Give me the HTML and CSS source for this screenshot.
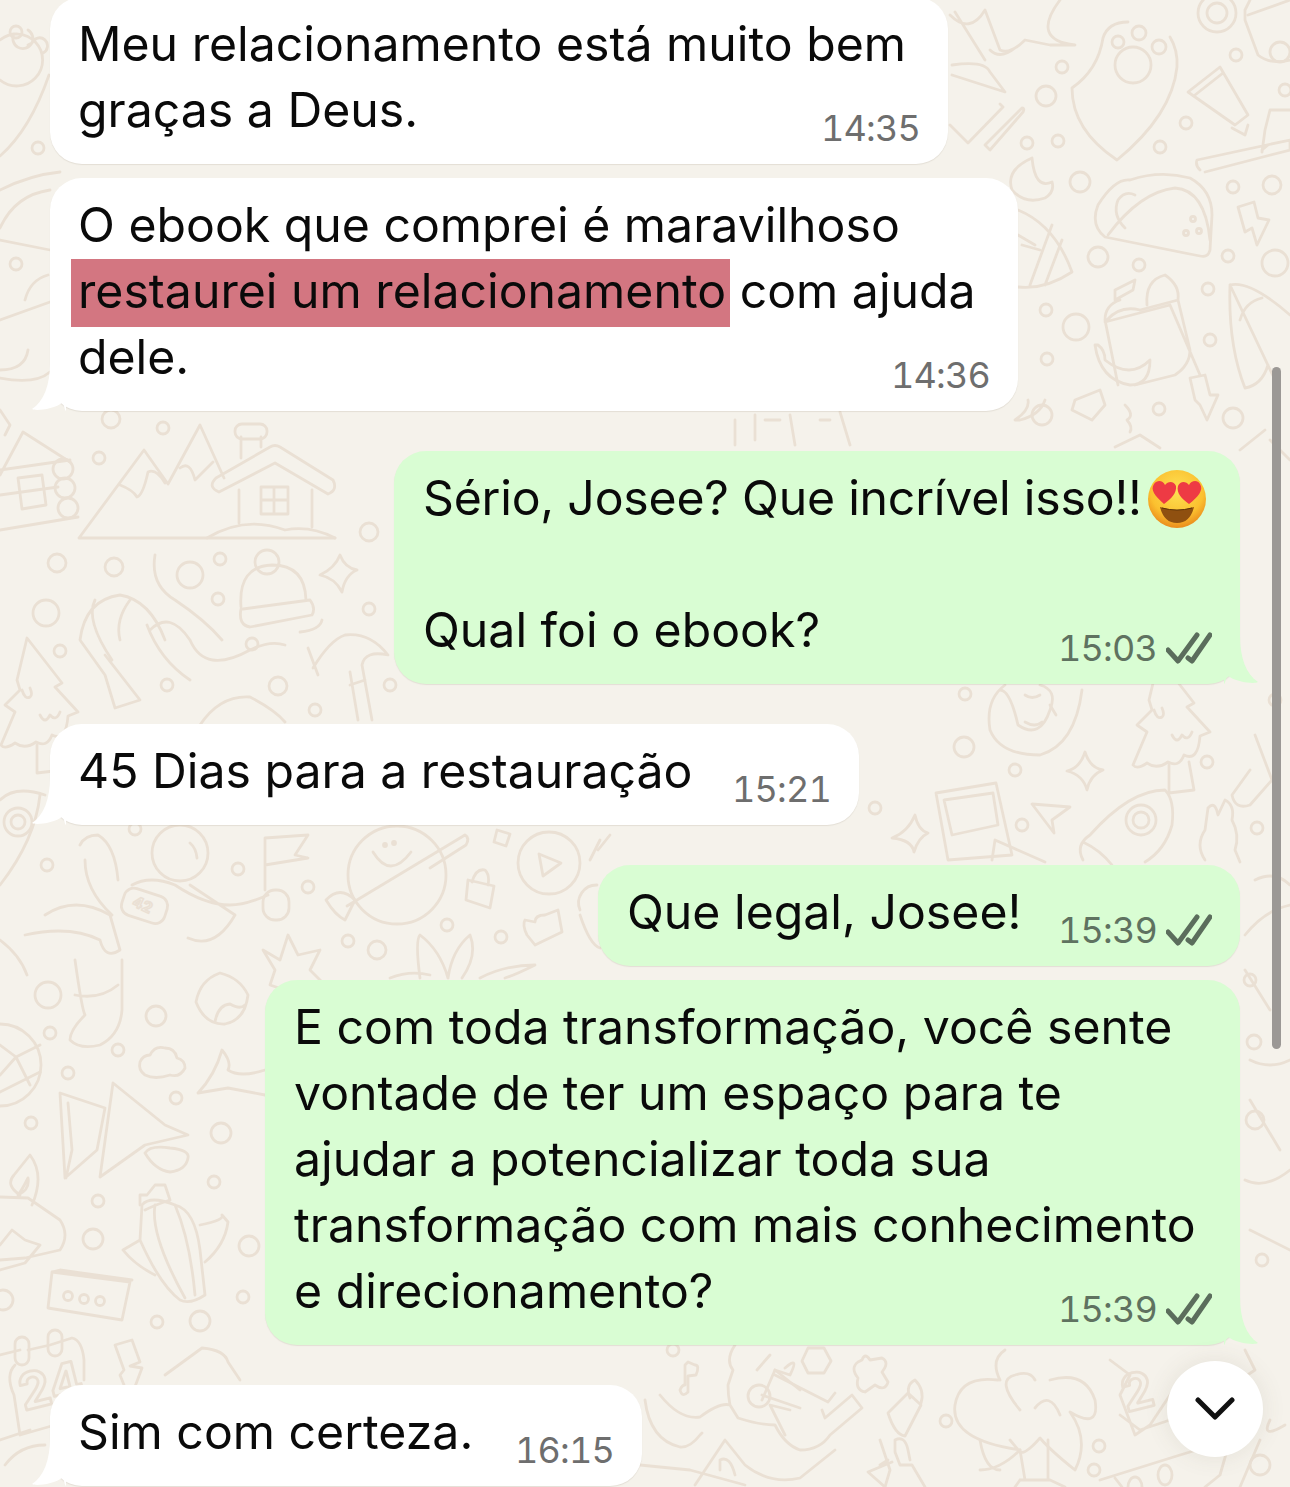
FILE: index.html
```html
<!DOCTYPE html>
<html lang="pt-BR">
  <head>
    <title>Conversa</title>
    <meta http-equiv="Content-Type" content="text/html; charset=UTF-8"/>
    <link rel="stylesheet" href="styles.css">
  </head>
  <body>
    <div class="chat">
      <!-- wallpaper doodles -->
      <svg class="wallpaper" width="1290" height="1487" viewBox="0 0 1290 1487" fill="none" aria-hidden="true">
        <defs>
          <g id="tree">
            <path d="M27 638L62 683L55 687L78 712L68 716Q66 742 52 735Q47 748 36 742Q25 750 15 743Q5 750 1 745L15 712L5 705L20 690L17 680Z"/>
            <path d="M37 745V773L62 770L57 742M22 690Q25 700 30 697Q33 695 30 688M40 715Q45 725 50 715Q56 722 60 712"/>
          </g>
        </defs>
        <g class="dots">
          <circle cx="16" cy="32" r="6"/><circle cx="38" cy="148" r="6"/><circle cx="16" cy="264" r="6"/>
          <circle cx="111" cy="419" r="9"/><circle cx="163" cy="428" r="6"/><circle cx="99" cy="458" r="6"/><circle cx="369" cy="532" r="9"/><circle cx="57" cy="563" r="9"/><circle cx="114" cy="567" r="9"/><circle cx="190" cy="575" r="13"/><circle cx="220" cy="559" r="6"/><circle cx="218" cy="599" r="6"/><circle cx="369" cy="609" r="6"/><circle cx="46" cy="613" r="13"/>
          <circle cx="1062" cy="67" r="6"/><circle cx="1046" cy="96" r="10"/><circle cx="1027" cy="143" r="6"/><circle cx="1058" cy="141" r="6"/><circle cx="1080" cy="182" r="10"/><circle cx="1186" cy="123" r="6"/><circle cx="1160" cy="147" r="6"/><circle cx="1236" cy="55" r="6"/><circle cx="1285" cy="90" r="6"/><circle cx="1233" cy="187" r="6"/><circle cx="1272" cy="185" r="9"/><circle cx="1098" cy="257" r="10"/><circle cx="1139" cy="265" r="6"/><circle cx="1228" cy="256" r="6"/><circle cx="1275" cy="263" r="13"/><circle cx="1046" cy="310" r="6"/><circle cx="1076" cy="327" r="13"/><circle cx="1208" cy="289" r="6"/><circle cx="1210" cy="340" r="6"/><circle cx="1047" cy="359" r="6"/><circle cx="1159" cy="409" r="6"/><circle cx="1042" cy="415" r="10"/><circle cx="1233" cy="418" r="10"/>
          <circle cx="60" cy="651" r="6"/><circle cx="167" cy="685" r="6"/><circle cx="252" cy="644" r="6"/><circle cx="278" cy="686" r="9"/><circle cx="315" cy="710" r="6"/><circle cx="390" cy="685" r="6"/><circle cx="47" cy="865" r="6"/><circle cx="238" cy="869" r="6"/><circle cx="308" cy="887" r="6"/><circle cx="348" cy="941" r="6"/><circle cx="377" cy="950" r="9"/><circle cx="135" cy="829" r="6"/>
          <circle cx="447" cy="925" r="6"/><circle cx="501" cy="937" r="6"/>
          <circle cx="965" cy="694" r="6"/><circle cx="964" cy="747" r="10"/><circle cx="875" cy="808" r="6"/><circle cx="1015" cy="770" r="6"/><circle cx="1022" cy="825" r="6"/><circle cx="1207" cy="762" r="6"/><circle cx="1257" cy="828" r="6"/>
          <circle cx="48" cy="995" r="13"/><circle cx="156" cy="1016" r="10"/><circle cx="50" cy="1033" r="6"/><circle cx="118" cy="1050" r="6"/><circle cx="68" cy="1073" r="6"/><circle cx="176" cy="1098" r="6"/><circle cx="31" cy="1123" r="6"/><circle cx="221" cy="1133" r="10"/><circle cx="214" cy="1182" r="6"/><circle cx="98" cy="1201" r="6"/><circle cx="93" cy="1239" r="10"/><circle cx="249" cy="1246" r="10"/><circle cx="243" cy="1297" r="6"/><circle cx="157" cy="1322" r="6"/><circle cx="200" cy="1321" r="10"/><circle cx="3" cy="1300" r="10"/>
          <circle cx="673" cy="1350" r="6"/><circle cx="946" cy="1421" r="6"/><circle cx="1099" cy="1446" r="6"/><circle cx="1094" cy="1470" r="6"/><circle cx="1254" cy="1042" r="7"/><circle cx="1262" cy="1260" r="6"/><circle cx="1255" cy="1120" r="9"/><circle cx="1260" cy="1465" r="10"/>
          <circle cx="1250" cy="980" r="6"/><circle cx="1275" cy="700" r="6"/>
        </g>
        <g class="doodles">
          <!-- top left paw, wraps from the right -->
          <path d="M0 80A26 26 0 1 0 0 40M14 34a10 10 0 1 0 14 -4M28 45l4 -2a8 8 0 1 1 11 10M49 75Q30 130 0 156"/>
          <path d="M0 190Q30 175 60 172M0 240L50 250M0 228Q15 195 50 190M0 320L50 302M25 300Q30 280 48 275M0 370Q25 370 28 350M0 378Q35 385 50 372M0 410L10 425L5 435"/>
          <!-- cabin -->
          <path d="M0 475L23 432L70 462M0 470L70 460M0 495L58 487M0 530L78 517"/>
          <path d="M18 478L42 475L46 505L22 509Z"/>
          <circle cx="63" cy="469" r="10"/><circle cx="65" cy="488" r="10"/><circle cx="68" cy="508" r="10"/>
          <!-- mountains and house -->
          <path d="M79 538L144 450L168 484L200 425L224 478M79 538H335M120 485Q133 490 137 497Q143 495 148 472Q156 468 165 483M180 468Q190 460 195 480Q205 470 213 462"/>
          <path d="M216 478Q207 487 219 492L275 463L328 494Q338 490 333 480L280 447Q275 444 270 447ZM239 490V523M312 490V527M241 458V437M261 447V437M207 538Q245 515 285 530Q310 525 335 538"/>
          <rect x="235" y="424" width="32" height="15" rx="7"/>
          <path d="M261 487H288V514H261ZM274 487V514M261 500H288"/>
          <!-- beanie -->
          <path d="M241 607Q238 566 272 565Q305 565 306 600M243 609L310 600Q316 608 312 615L250 627Q238 625 241 609"/>
          <circle cx="267" cy="562" r="12"/>
          <path d="M320 575Q335 568 340 555Q345 568 357 570Q345 575 342 592Q335 578 320 575ZM322 620Q320 630 300 632M155 555Q150 585 175 600Q205 620 222 640"/>
          <!-- shrimp, hammer -->
          <path d="M80 640Q85 600 120 595Q150 600 165 640M95 600Q85 620 112 660M130 600Q115 620 120 640M80 640L105 675L115 708L140 700L105 655"/>
          <path d="M150 630Q170 610 190 640Q205 675 250 650Q270 640 285 645M147 625Q160 660 190 680"/>
          <path d="M308 648L318 675M313 668Q330 640 345 635Q370 632 388 655Q365 650 362 665L372 720M350 672L358 720M350 685L365 680"/>
          <path d="M200 725Q220 695 250 697Q275 710 285 722"/>
          <use href="#tree"/>
          <use href="#tree" x="1132" y="20"/>
          <path d="M0 800Q15 785 45 795M40 795Q35 840 0 885"/>
          <circle cx="18" cy="822" r="14"/><circle cx="18" cy="822" r="7"/>
          <!-- astronaut -->
          <circle cx="180" cy="853" r="28"/>
          <path d="M190 843Q196 848 197 858M80 845Q85 835 98 835Q115 845 118 880M85 860Q85 890 112 915M132 885Q150 875 175 885Q205 905 230 905Q245 905 268 895M190 885L235 915Q215 950 188 938"/>
          <rect x="122" y="892" width="45" height="28" rx="10" transform="rotate(18 145 906)"/>
          <text class="num small" x="133" y="911" transform="rotate(25 145 905)">42</text>
          <path d="M45 915Q75 895 110 915L120 950Q105 960 100 940Q70 925 25 935M0 940Q20 955 27 975M75 960Q82 1010 85 1015Q70 1030 70 1040Q80 1050 100 1045Q120 1035 122 1010V960M75 995Q100 1000 118 985"/>
          <path d="M265 838L308 835L295 855L308 858L265 865M265 838V890"/>
          <rect x="263" y="890" width="26" height="30" rx="12"/>
          <!-- burst -->
          <path d="M263 950L280 960L288 935L298 955L320 950L310 970L322 982L300 985L285 990L270 985L275 970Z"/>
          <!-- planet -->
          <circle cx="397" cy="875" r="49"/>
          <path d="M373 852Q390 880 411 852M347 906L465 835Q470 838 466 845L430 868M326 900Q340 885 355 900Q350 910 345 920Q335 915 326 900Z"/>
          <circle cx="385" cy="845" r="1.5"/><circle cx="394" cy="843" r="1.5"/>
          <circle cx="549" cy="863" r="31"/>
          <path d="M539 854L561 863L543 876Z"/>
          <path d="M497 830L510 834L506 846L494 842ZM468 880L494 886L490 908L466 900ZM472 882Q476 868 485 870Q490 875 488 885"/>
          <path d="M525 920L535 922Q535 915 545 915L558 910L562 932L535 945L527 935Q522 925 525 920ZM600 840L590 860M598 850L610 835M580 910A18 18 0 0 1 597 885M580 915Q590 945 600 948"/>
          <path d="M420 978Q415 940 420 935Q440 950 448 978M448 978Q452 950 470 935Q478 955 462 978M480 978Q505 965 535 965Q515 975 505 978M390 978Q410 970 430 975"/>
          <!-- tent and bowl -->
          <path d="M60 1093L105 1108L97 1150L65 1178L60 1093ZM113 1083L165 1125L188 1135L145 1145L100 1177L113 1083ZM68 1103L72 1150L66 1178"/>
          <path d="M145 1153Q150 1145 170 1148Q190 1150 188 1158Q186 1170 170 1172Q155 1170 145 1153"/>
          <!-- cloud, rock, fin -->
          <path d="M145 1075Q138 1070 140 1062Q143 1055 150 1055Q155 1045 165 1048Q175 1048 177 1058Q185 1060 185 1068Q180 1078 170 1075Q155 1080 145 1075Z"/>
          <path d="M196 1002Q200 980 220 973Q240 978 248 995Q245 1020 225 1024Q205 1025 196 1002ZM215 1022Q218 1005 230 1004Q240 1010 245 1005"/>
          <path d="M198 1093Q215 1075 222 1050Q232 1062 228 1070Q240 1078 265 1070M198 1093L228 1088L265 1095"/>
          <!-- cactus -->
          <path d="M142 1205Q150 1195 175 1205Q195 1210 200 1250L205 1295Q190 1305 180 1300Q160 1285 140 1240ZM155 1205Q150 1235 185 1298M175 1205Q190 1240 195 1295M200 1225Q225 1220 222 1215L228 1222Q225 1245 205 1262M140 1240L123 1250Q135 1265 155 1275M140 1205L140 1195L147 1195L155 1185L165 1185L170 1200Q155 1205 145 1210"/>
          <!-- candle -->
          <path d="M20 1195Q5 1185 14 1175L30 1155Q45 1175 32 1205M18 1195Q30 1190 28 1178Q22 1190 18 1195M0 1197L28 1198L60 1220Q70 1235 60 1250L25 1258L0 1260M0 1270L25 1263L40 1245L25 1240L12 1230L0 1245"/>
          <!-- box -->
          <path d="M52 1272L130 1282L122 1320L48 1308ZM52 1272L60 1270L132 1280"/>
          <circle cx="68" cy="1296" r="4.5"/><circle cx="84" cy="1299" r="4.5"/><circle cx="100" cy="1301" r="4.5"/>
          <!-- globe -->
          <circle cx="0" cy="1065" r="41"/>
          <path d="M0 1045L16 1057L40 1045M16 1057L0 1075M16 1057L30 1085M0 1092L40 1072"/>
          <!-- dumbbell, lightning, calendar -->
          <path d="M0 1355L20 1350M28 1350L50 1345L72 1338Q82 1340 84 1360V1380"/>
          <rect x="15" y="1337" width="14" height="28" rx="7"/><rect x="48" y="1330" width="14" height="26" rx="7"/>
          <path d="M115 1345L132 1340L140 1362L130 1366L142 1368L130 1400L120 1375L124 1370Z"/>
          <path d="M165 1375L202 1348Q225 1350 228 1362L240 1380M14 1395L20 1435L90 1415L86 1395M14 1395Q5 1375 15 1365"/>
          <text class="num" x="18" y="1406" transform="rotate(-14 40 1385)">24</text>
          <path d="M0 1440L30 1430M5 1465Q20 1445 45 1445"/>
          <!-- upper right group -->
          <path d="M950 15Q970 35 985 10L1000 50Q1010 55 1025 40L1050 45L1075 45Q1030 40 1060 0M952 65Q985 60 990 72L1005 92L952 75M955 12L985 60M990 50Q1000 60 1015 48"/>
          <path d="M1072 88Q1098 70 1103 38Q1108 22 1128 22M1170 37Q1178 50 1177 67Q1172 115 1117 160Q1072 130 1072 88"/>
          <circle cx="1133" cy="65" r="18"/><circle cx="1118" cy="42" r="6"/><circle cx="1139" cy="33" r="7"/><circle cx="1159" cy="47" r="7"/>
          <path d="M950 125L968 143L1003 107L1000 104M985 145L1022 108Q1025 108 1023 112L990 150Z"/>
          <circle cx="1217" cy="13" r="19"/><circle cx="1217" cy="13" r="10"/>
          <path d="M1250 0L1245 10L1245 20L1258 55Q1270 65 1290 60M1248 15L1290 0"/>
          <circle cx="1280" cy="52" r="10"/>
          <path d="M1188 92L1220 67L1248 115L1235 125ZM1195 95L1223 73M1232 128L1245 135L1248 125"/>
          <path d="M1200 170Q1195 165 1197 160L1290 140V150L1205 172M1262 152L1265 130L1270 110L1290 110M1262 150L1268 145"/>
          <path d="M1032 158Q1005 170 1012 190Q1025 205 1045 198Q1055 192 1052 182Q1035 190 1032 158Z"/>
          <!-- taco -->
          <path d="M1105 237Q1090 225 1098 205Q1115 178 1130 180Q1160 170 1190 178Q1212 190 1212 215L1210 250Q1208 258 1200 256Z"/>
          <path d="M1108 235Q1140 192 1175 188Q1205 190 1210 240M1125 228Q1112 215 1118 200Q1125 190 1135 195"/>
          <circle cx="1193" cy="219" r="2.5"/><circle cx="1199" cy="231" r="2.5"/><circle cx="1186" cy="233" r="2.5"/>
          <path d="M1238 207L1254 202L1258 218L1269 220L1257 245L1252 228L1245 232Z"/>
          <!-- football -->
          <path d="M1018 210Q1055 225 1072 272Q1045 290 1018 287M1052 225L1030 285M1062 240L1045 285M1022 245L1040 250M1018 235L1035 245"/>
          <!-- shopping bag -->
          <path d="M1105 320L1118 385M1107 320Q1120 305 1140 310L1178 300L1190 350Q1190 365 1175 375L1135 385M1105 322L1170 305L1200 375M1115 290L1135 280L1133 290L1115 300ZM1120 300Q1105 305 1105 320M1147 305Q1145 280 1165 275Q1180 285 1178 300"/>
          <path d="M1095 345Q1100 380 1130 385Q1150 385 1150 360Q1130 380 1105 360Q1105 350 1098 345Z"/>
          <!-- surfboard -->
          <path d="M1230 285Q1228 345 1245 388Q1262 385 1268 365M1230 285Q1250 280 1290 315M1240 320Q1245 302 1262 298M1230 285L1275 380"/>
          <path d="M1045 400Q1040 415 1020 420L1015 420Q1030 410 1028 400M1075 400L1100 390L1105 405L1092 420L1072 410Z"/>
          <path d="M1125 405Q1135 415 1127 420Q1133 427 1130 432M1115 447L1140 435L1160 448M1190 378L1205 375L1210 395L1218 395L1207 420L1200 405L1195 400Z"/>
          <!-- area below grey check -->
          <path d="M1240 450L1265 430M1270 440L1290 460"/>
          <path d="M735 420V445M755 415V440M790 415L795 445M840 412L850 445M780 420H765M820 420H830"/>
          <path d="M1005 685Q985 700 990 730Q1000 755 1040 755Q1075 745 1082 690M1000 690Q1010 690 1018 725Q1040 740 1050 710Q1058 690 1040 685"/>
          <path d="M1025 722Q1035 728 1042 722M1025 695Q1032 700 1040 695M1050 705L1056 715"/>
          <path d="M1255 735L1272 780L1250 805Q1235 810 1232 795L1250 770"/>
          <!-- frames -->
          <path d="M936 793L996 783L1012 855L948 860ZM944 800L993 793L998 825L952 835Z"/>
          <path d="M992 860L995 840L1045 862"/>
          <path d="M915 815Q918 830 928 833Q918 838 914 852Q912 840 892 838Q908 832 915 815ZM1085 752Q1090 768 1103 770Q1090 775 1087 790Q1083 775 1067 771Q1080 768 1085 752ZM1032 804L1070 807L1052 820L1054 833Z"/>
          <path d="M1083 860Q1075 845 1090 835Q1130 790 1165 790Q1175 800 1172 825Q1165 850 1145 862M1083 842Q1100 850 1112 865"/>
          <circle cx="1141" cy="820" r="15"/><circle cx="1141" cy="820" r="8"/>
          <path d="M1205 860Q1195 845 1205 830L1208 808Q1215 800 1218 815L1225 800Q1235 805 1232 820Q1240 835 1235 850L1240 862"/>
          <!-- right rail -->
          <path d="M1255 880Q1275 870 1290 885M1245 935Q1265 910 1290 905M1245 970L1270 1010M1250 1060Q1270 1070 1290 1060M1250 1100L1280 1150M1245 1180Q1265 1190 1290 1170M1250 1230L1290 1250M1245 1350L1255 1370L1240 1380"/>
          <!-- lower centre figure -->
          <path d="M645 1400Q650 1440 680 1447Q690 1448 700 1435L702 1433M660 1395Q680 1420 700 1417Q720 1402 730 1405L738 1418Q760 1425 775 1425Q785 1445 800 1450Q820 1450 830 1435L862 1408L852 1395L825 1418L822 1410M730 1405Q728 1395 728 1385L733 1370Q725 1360 735 1345M785 1435L770 1405L790 1410M762 1400L775 1370L800 1390"/>
          <path d="M762 1395L800 1408M775 1375L828 1402L835 1393"/>
          <circle cx="759" cy="1396" r="11"/>
          <path d="M757 1370L770 1355M775 1370L790 1375Q800 1355 785 1368"/>
          <path d="M695 1485L725 1440L745 1465Q770 1485 800 1478L835 1450M640 1465L690 1470L745 1485M720 1470V1460Q730 1455 735 1475"/>
          <path d="M688 1362L695 1365Q700 1365 696 1375L688 1376V1392Q682 1398 680 1390Q682 1385 685 1385V1365Z"/>
          <path d="M808 1348H824L831 1361L824 1373H808L802 1361Z"/>
          <path d="M862 1360Q865 1352 870 1360L882 1358Q890 1362 882 1372L888 1382Q885 1392 875 1385L865 1392Q855 1390 858 1378Q850 1368 858 1362Z"/>
          <path d="M888 1413L908 1393L921 1405L905 1436Q895 1435 888 1413ZM910 1398Q905 1385 915 1380Q925 1390 921 1403"/>
          <path d="M880 1440L890 1470L885 1487M925 1487L912 1465L900 1465L895 1452V1440Q905 1435 908 1450L910 1460"/>
          <path d="M892 1462L868 1472L885 1487M880 1465L888 1460"/>
          <!-- big tree -->
          <path d="M998 1380Q960 1375 955 1405Q950 1440 1020 1450Q1000 1470 980 1470M1000 1380Q990 1360 1005 1350M1000 1470Q985 1470 980 1440M1050 1380Q1085 1370 1095 1400Q1100 1430 1070 1412Q1090 1440 1075 1470Q1050 1450 1040 1438Q1025 1455 1020 1452L1010 1440"/>
          <path d="M1020 1410Q995 1380 1015 1375Q1030 1370 1035 1380M1035 1408Q1050 1390 1060 1415M1020 1450L1025 1480M1048 1440V1480M1020 1480Q1035 1480 1050 1480L1065 1487M1015 1487L1020 1480"/>
          <!-- calendar and melon -->
          <path d="M1110 1360L1130 1375L1120 1395L1135 1435L1150 1425L1180 1380M1120 1415L1140 1430L1170 1420"/>
          <text class="num" x="1120" y="1408" transform="rotate(-14 1140 1385)">2</text>
          <path d="M1100 1480L1180 1455L1230 1440L1220 1475L1205 1487M1115 1478L1122 1487"/>
          <ellipse cx="1165" cy="1475" rx="7" ry="10"/><ellipse cx="1135" cy="1487" rx="7" ry="10"/>
          <path d="M1270 1420Q1260 1440 1285 1425M1240 1487L1260 1440"/>
        </g>
      </svg>

      <div class="messages">
        <div class="bubble in w-898">
          <p class="text">Meu relacionamento está muito bem<br>graças a Deus.</p>
          <div class="meta"><span class="time">14:35</span></div>
        </div>
        <div class="bubble in w-968 has-tail">
          <p class="text">O ebook que comprei é maravilhoso<br><span class="mark">restaurei um relacionamento</span> com ajuda<br>dele.</p>
          <div class="meta"><span class="time">14:36</span></div>
          <svg class="tail" width="34" height="48" viewBox="0 0 34 48"><path d="M18 0C18 22 12 38 0 46C2 48 22 47 31 39Q33 48 34 48V0Z"/></svg>
        </div>

        <div class="bubble out w-846 next-group has-tail">
          <p class="text"><span class="tight">Sério, Josee? Que incrível isso!!</span><svg class="emoji" width="60" height="60" viewBox="0 0 60 60"><defs><radialGradient id="face" cx="50%" cy="35%" r="65%"><stop offset="0" stop-color="#fde154"/><stop offset=".7" stop-color="#fbc02f"/><stop offset="1" stop-color="#ea8b1c"/></radialGradient></defs><circle cx="30" cy="30" r="29" fill="url(#face)"/><path d="M13 38Q30 44 47 38Q43 54 30 54Q17 54 13 38Z" fill="#8f5010"/><path d="M15 39Q30 43 45 39" stroke="#5b3208" stroke-width="1" fill="none"/><path d="M17 35C8 27 3 21 7 15C11 10 16 12 18 16C21 12 27 12 29 17C30 24 24 30 17 35Z" fill="#ee3a44"/><path d="M42 35C35 30 29 24 31 17C33 12 39 12 42 16C44 12 50 10 53 15C57 21 51 28 42 35Z" fill="#ee3a44"/></svg><br>&nbsp;<br>Qual foi o ebook?</p>
          <div class="meta">
            <span class="time">15:03</span>
            <svg class="checks" width="46" height="32" viewBox="0 0 46 32"><path d="M2 18L12 29L31 3M22 26L26 29L44 3"/></svg>
          </div>
          <svg class="tail" width="34" height="48" viewBox="0 0 34 48"><path d="M16 0C16 22 22 38 34 46C32 48 12 47 3 39Q1 48 0 48V0Z"/></svg>
        </div>

        <div class="bubble in w-809 next-group has-tail">
          <p class="text">45 Dias para a restauração</p>
          <div class="meta"><span class="time">15:21</span></div>
          <svg class="tail" width="34" height="48" viewBox="0 0 34 48"><path d="M18 0C18 22 12 38 0 46C2 48 22 47 31 39Q33 48 34 48V0Z"/></svg>
        </div>

        <div class="bubble out w-642 next-group">
          <p class="text">Que legal, Josee!</p>
          <div class="meta">
            <span class="time">15:39</span>
            <svg class="checks" width="46" height="32" viewBox="0 0 46 32"><path d="M2 18L12 29L31 3M22 26L26 29L44 3"/></svg>
          </div>
        </div>
        <div class="bubble out w-975 has-tail">
          <p class="text">E com toda transformação, você sente<br>vontade de ter um espaço para te<br>ajudar a potencializar toda sua<br>transformação com mais conhecimento<br>e direcionamento?</p>
          <div class="meta">
            <span class="time">15:39</span>
            <svg class="checks" width="46" height="32" viewBox="0 0 46 32"><path d="M2 18L12 29L31 3M22 26L26 29L44 3"/></svg>
          </div>
          <svg class="tail" width="34" height="48" viewBox="0 0 34 48"><path d="M16 0C16 22 22 38 34 46C32 48 12 47 3 39Q1 48 0 48V0Z"/></svg>
        </div>

        <div class="bubble in w-592 next-group has-tail">
          <p class="text">Sim com certeza.</p>
          <div class="meta"><span class="time">16:15</span></div>
          <svg class="tail" width="34" height="48" viewBox="0 0 34 48"><path d="M18 0C18 22 12 38 0 46C2 48 22 47 31 39Q33 48 34 48V0Z"/></svg>
        </div>
      </div>

      <div class="scrollbar"></div>
      <button class="to-bottom">
        <svg width="40" height="26" viewBox="0 0 40 26"><path d="M3 4L20 21L37 4"/></svg>
      </button>
    </div>
  </body>
</html>
```

FILE: styles.css
```css
html, body {
  margin: 0;
  padding: 0;
}

body {
  font-family: 'Inter', 'Liberation Sans', sans-serif;
  color: #0a0a0a;
}

.chat {
  position: relative;
  width: 1290px;
  height: 1487px;
  overflow: hidden;
  background-color: #f5f2eb;
}

.wallpaper {
  position: absolute;
  top: 0;
  left: 0;
}
.wallpaper g {
  stroke: #eae0d4;
  stroke-width: 2.8;
  stroke-linecap: round;
  stroke-linejoin: round;
}
.num {
  font-size: 50px;
  font-weight: 700;
  fill: none;
}
.num.small {
  font-size: 15px;
  stroke-width: 1.6;
}

.messages {
  position: relative;
  display: flex;
  flex-direction: column;
  gap: 14px;
  margin-top: -3px;
  padding: 0 50px;
}

.bubble {
  position: relative;
  display: grid;
  box-sizing: border-box;
  padding: 14px 28px 21px 28px;
  border-radius: 32px;
  box-shadow: 0 1px 1px rgba(120, 105, 85, 0.14);
}
.bubble.in {
  align-self: flex-start;
  background-color: #fff;
}
.bubble.out {
  align-self: flex-end;
  background-color: #d9fdd3;
  padding-left: 29px;
  padding-right: 28px;
}
.next-group {
  margin-top: 26px;
}

.w-898 { width: 898px; }
.w-968 { width: 968px; }
.w-846 { width: 846px; }
.w-809 { width: 809px; }
.w-642 { width: 642px; }
.w-975 { width: 975px; }
.w-592 { width: 592px; }

.text {
  grid-area: 1 / 1;
  margin: 0;
  font-size: 48.2px;
  line-height: 66px;
  white-space: nowrap;
}

.tight {
  letter-spacing: -0.22px;
}

.mark {
  display: inline-block;
  margin: 0 -4px -3px -7px;
  padding: 0 4px 3px 7px;
  background-image: linear-gradient(#d37681, #d37681);
  background-size: 100% 68px;
  background-position: 0 1px;
  background-repeat: no-repeat;
}

.emoji {
  vertical-align: -14px;
  margin-left: 5px;
}

.meta {
  grid-area: 1 / 1;
  align-self: end;
  justify-self: end;
  display: flex;
  align-items: center;
  gap: 9px;
  margin-bottom: -5px;
}

.time {
  font-size: 36px;
  line-height: 40px;
  letter-spacing: -0.8px;
  font-variant-numeric: tabular-nums;
  color: #6e6e6e;
}
.out .time {
  color: #5f7260;
}

.checks path {
  fill: none;
  stroke: #5b6d5c;
  stroke-width: 5;
  stroke-linecap: round;
  stroke-linejoin: round;
}

.tail {
  position: absolute;
  bottom: 0;
}
.in .tail {
  left: -18px;
  fill: #fff;
}
.out .tail {
  right: -18px;
  fill: #d9fdd3;
}

.scrollbar {
  position: absolute;
  top: 367px;
  left: 1272px;
  width: 9px;
  height: 682px;
  border-radius: 5px;
  background-color: #9b9895;
}

.to-bottom {
  position: absolute;
  top: 1361px;
  left: 1167px;
  display: flex;
  align-items: center;
  justify-content: center;
  width: 96px;
  height: 96px;
  padding: 0;
  border: 0;
  border-radius: 50%;
  background-color: #fff;
  box-shadow: 0 0 24px rgba(90, 80, 60, 0.1);
}
.to-bottom path {
  fill: none;
  stroke: #111;
  stroke-width: 5;
  stroke-linecap: round;
  stroke-linejoin: round;
}
```
